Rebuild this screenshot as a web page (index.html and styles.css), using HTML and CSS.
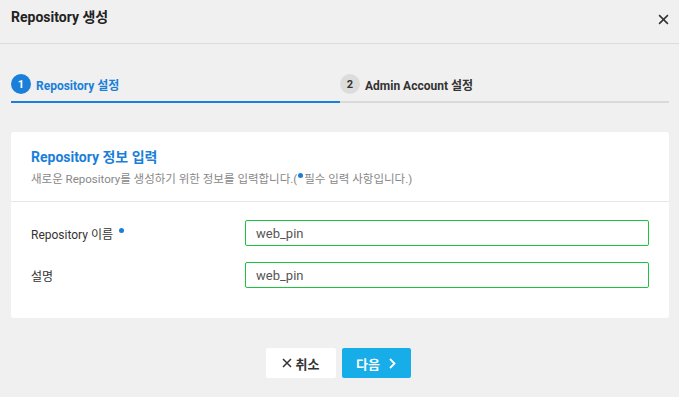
FILE: index.html
```html
<!DOCTYPE html>
<html lang="ko">
<head>
    <meta charset="UTF-8">
    <meta name="viewport" content="width=device-width, initial-scale=1.0">
    <title>Repository 생성</title>
    <link rel="stylesheet" href="styles.css">
</head>
<body>
    <div class="modal">
        <div class="modal-header">
            <h1 class="modal-title">Repository 생성</h1>
            <button class="close-btn" type="button" aria-label="닫기">
                <svg width="11" height="11" viewBox="0 0 10 10"><path d="M1 1L9 9M9 1L1 9" stroke="#333" stroke-width="1.4" fill="none"/></svg>
            </button>
        </div>

        <div class="stepper">
            <div class="step active">
                <span class="step-num">1</span>
                <span class="step-label">Repository 설정</span>
            </div>
            <div class="step">
                <span class="step-num">2</span>
                <span class="step-label">Admin Account 설정</span>
            </div>
        </div>

        <div class="card">
            <div class="card-header">
                <h2 class="card-title">Repository 정보 입력</h2>
                <p class="card-desc">새로운 Repository를 생성하기 위한 정보를 입력합니다.(<span class="dot"></span>필수 입력 사항입니다.)</p>
            </div>
            <form class="card-body" action="#" method="post">
                <label class="field-label" for="repo-name">Repository 이름 <span class="dot req"></span></label>
                <input class="field-input" type="text" id="repo-name" value="web_pin">

                <label class="field-label" for="repo-desc">설명</label>
                <input class="field-input" type="text" id="repo-desc" value="web_pin">
            </form>
        </div>

        <div class="actions">
            <button type="button" class="btn btn-cancel">
                <svg width="10" height="10" viewBox="0 0 10 10"><path d="M1 1L9 9M9 1L1 9" stroke="#333" stroke-width="1.5" fill="none"/></svg>
                취소
            </button>
            <button type="button" class="btn btn-next">
                다음
                <svg width="8" height="11" viewBox="0 0 8 11"><path d="M2 1L6.5 5.5L2 10" stroke="#fff" stroke-width="1.8" fill="none"/></svg>
            </button>
        </div>
    </div>
</body>
</html>
```

FILE: styles.css
```css
body {
    margin: 0;
    padding: 0;
    background-color: #f0f0f0;
    font-family: Roboto, "Noto Sans CJK KR", sans-serif;
    color: #333;
}
.modal {
    width: 679px;
    height: 397px;
}
.modal-header {
    height: 43px;
    border-bottom: 1px solid #dcdcdc;
    padding: 0 10px 0 11px;
    display: flex;
    justify-content: space-between;
    box-sizing: content-box;
}
.modal-title {
    margin: 8px 0 0;
    font-size: 14px;
    line-height: 18px;
    font-weight: bold;
    color: #222;
}
.close-btn {
    border: none;
    background: none;
    padding: 0;
    margin: 14px 0 0;
    width: 11px;
    height: 11px;
    cursor: pointer;
    display: flex;
}
.stepper {
    margin: 30px 10px 0 11px;
    display: flex;
}
.step {
    flex: 1;
    display: flex;
    align-items: center;
    gap: 5px;
    padding-bottom: 7px;
    border-bottom: 2px solid #dadada;
}
.step.active {
    border-bottom-color: #1a7fd9;
}
.step-num {
    width: 20px;
    height: 20px;
    border-radius: 50%;
    background-color: #dcdcdc;
    color: #333;
    font-size: 11px;
    font-weight: bold;
    display: flex;
    align-items: center;
    justify-content: center;
}
.step-label {
    font-size: 12px;
    font-weight: bold;
    color: #333;
}
.step.active .step-num {
    background-color: #1a7fd9;
    color: #fff;
}
.step.active .step-label {
    color: #1a7fd9;
}
.card {
    margin: 29px 10px 0 11px;
    background-color: #fff;
    border-radius: 3px;
}
.card-header {
    padding: 16px 20px 14px;
    border-bottom: 1px solid #e6e6e6;
}
.card-title {
    margin: 0;
    font-size: 14px;
    line-height: 18px;
    font-weight: bold;
    color: #1a7fd9;
}
.card-desc {
    margin: 5px 0 0;
    font-size: 11.5px;
    line-height: 16px;
    color: #888;
}
.dot {
    display: inline-block;
    width: 5px;
    height: 5px;
    border-radius: 50%;
    background-color: #1a7fd9;
    vertical-align: 5px;
    margin: 0 1px;
}
.dot.req {
    margin-left: 3px;
    vertical-align: 6px;
}
.card-body {
    margin: 0;
    padding: 18px 20px 30px;
    display: grid;
    grid-template-columns: 214px 1fr;
    row-gap: 16px;
    align-items: center;
}
.field-label {
    font-size: 12px;
    color: #333;
}
.field-input {
    height: 26px;
    box-sizing: border-box;
    border: 1px solid #1fc23f;
    border-radius: 2px;
    padding: 0 10px;
    font-family: Roboto, "Noto Sans CJK KR", sans-serif;
    font-size: 13px;
    color: #555;
    outline: none;
}
.actions {
    margin-top: 30px;
    display: flex;
    justify-content: center;
    gap: 6px;
    padding-right: 3px;
}
.btn {
    height: 30px;
    border: none;
    border-radius: 2px;
    font-family: Roboto, "Noto Sans CJK KR", sans-serif;
    font-size: 13px;
    font-weight: bold;
    display: flex;
    align-items: center;
    justify-content: center;
    gap: 4px;
    cursor: pointer;
}
.btn-cancel {
    width: 70px;
    background-color: #fff;
    color: #333;
}
.btn-next {
    width: 69px;
    background-color: #16ade9;
    color: #fff;
    gap: 8px;
}
```
